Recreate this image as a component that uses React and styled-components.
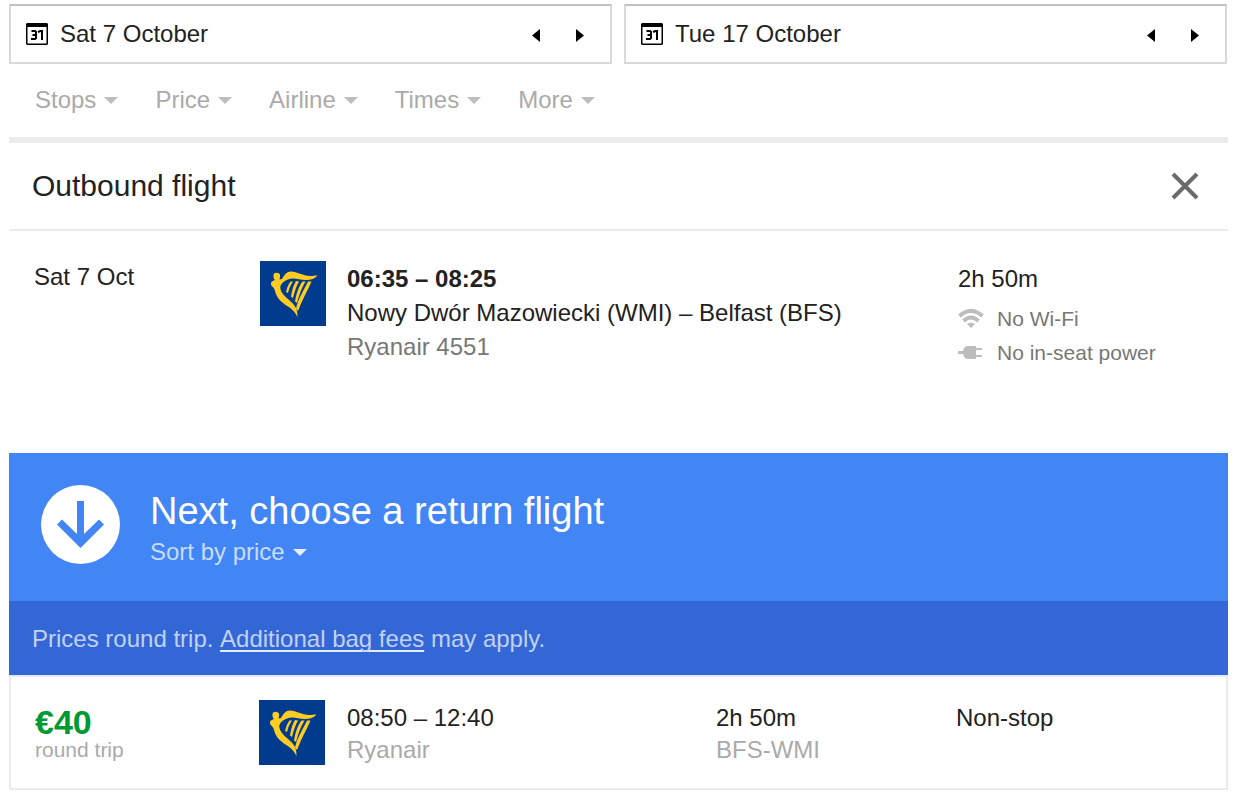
import React from "react";
import styled, { createGlobalStyle } from "styled-components";

const GlobalStyle = createGlobalStyle`
  *, *::before, *::after { box-sizing: border-box; }
  body {
    margin: 0;
    background: #fff;
    color: #222;
    font: 24px/32px "Liberation Sans", Arial, sans-serif;
  }
  h1, h2, p, ul { margin: 0; padding: 0; font-weight: 400; }
  button { margin: 0; padding: 0; border: 0; background: none; color: inherit; font: inherit; cursor: pointer; }
  svg { display: block; flex: none; }
`;

const Page = styled.main`
  padding: 4px 12px 12px 9px;
`;

const DateBar = styled.div`
  display: grid;
  grid-template-columns: 1fr 1fr;
  gap: 12px;
  padding-right: 1px;
`;

const DateBox = styled.div`
  display: flex;
  align-items: center;
  height: 60px;
  padding: 0 20px 0 15px;
  border: 2px solid #d9d9d9;
  border-top-color: #c0c0c0;
`;

const DateInput = styled.input`
  flex: 1;
  min-width: 0;
  height: 32px;
  margin: 0 0 0 12px;
  padding: 0;
  border: 0;
  outline: 0;
  background: none;
  color: #222;
  font: inherit;
`;

const StepButton = styled.button`
  display: grid;
  place-items: center;
  width: 44px;
  height: 44px;
  padding-top: 2px;
  &:last-child { margin-right: -12px; }
`;

const Filters = styled.nav`
  display: flex;
  gap: 37px;
  height: 79px;
  padding: 20px 26px 0;
  border-bottom: 6px solid #ebebeb;
`;

const MenuButton = styled.button`
  display: flex;
  align-items: center;
  gap: 8px;
  height: 32px;
  color: ${(p) => p.$color};
  &::after {
    content: "";
    border: solid transparent;
    border-width: 7px 7px 0;
    border-top-color: ${(p) => p.$arrow};
  }
`;

const SectionHeader = styled.header`
  display: flex;
  align-items: center;
  justify-content: space-between;
  height: 88px;
  padding: 0 29px 0 23px;
  border-bottom: 2px solid #ebebeb;
`;

const SectionTitle = styled.h1`
  font-size: 30px;
  line-height: 36px;
`;

const Outbound = styled.section`
  display: grid;
  grid-template-columns: 226px 87px 1fr 270px;
  align-items: start;
  min-height: 222px;
  padding: 30px 0 30px 25px;
`;

const Lines = styled.div`
  display: grid;
  grid-auto-rows: ${(p) => p.$step}px;
  align-items: center;
  padding-top: ${(p) => p.$top || 0}px;
`;

const Muted = styled.span`
  color: ${(p) => p.$color || "#aaa"};
`;

const Amenity = styled.span`
  display: flex;
  align-items: center;
  gap: 13px;
  padding-top: 12px;
  color: #777;
  font-size: 21px;
  line-height: 24px;
`;

const NextPanel = styled.section`
  display: flex;
  gap: 30px;
  min-height: 148px;
  padding: 32px;
  background: #4285f4;
  color: #fff;
`;

const NextTitle = styled.h2`
  font-size: 38px;
  line-height: 48px;
  padding: 2px 0 1px;
`;

const FeeNote = styled.p`
  display: flex;
  align-items: center;
  min-height: 74px;
  padding: 2px 23px 0;
  background: #3367d6;
  color: #c2d1f3;
  white-space: pre;
  a { color: inherit; text-underline-offset: 3px; text-decoration: underline 2px #e4ebfa; text-decoration-skip-ink: none; }
`;

const Result = styled.article`
  display: grid;
  grid-template-columns: 224px 88px 1fr 240px 270px;
  align-items: start;
  min-height: 115px;
  padding: 23px 0 22px 24px;
  border: 2px solid #ebebeb;
  border-top-color: #e3eafa;
`;

const FareBlock = styled.div`
  display: grid;
  padding-top: 4px;
`;

const Price = styled.strong`
  color: #093;
  font-size: 34px;
  line-height: 36px;
`;

const FareNote = styled.span`
  color: #aaa;
  font-size: 21px;
  line-height: 20px;
`;

function CalendarIcon() {
  return (
    <svg width="22" height="22" viewBox="0 0 22 22" aria-hidden="true">
      <path fill="#000" fillRule="evenodd" d="M1 0H21L22 1V21L21 22H1L0 21V1ZM1.500 4V20.500H20.500V4Z" />
      <path fill="none" stroke="#000" strokeWidth="2" d="M5.500 8H9L10 9V15L9 16H5M6.500 12H10M12 9L14.500 8H16V17" />
    </svg>
  );
}

function StepArrow({ back }) {
  return (
    <svg width="8" height="13" viewBox="0 0 8 13" aria-hidden="true">
      <path fill="#000" d={back ? "M8 0V13L0 6.5Z" : "M0 0V13L8 6.5Z"} />
    </svg>
  );
}

function HarpLogo() {
  return (
    <svg width="66" height="65" viewBox="0 0 66 65" role="img" aria-label="Ryanair">
      <rect width="66" height="65" fill="#003b8e" />
      <g fill="#fc2">
        <path d="M13.500 14.500C13.500 12.500 15 11.500 17 11.800C19.500 12 20.500 13.500 20 16L19.500 18.500L22 18C24 14 27 10.500 31 10.500C37 10.500 43 15 50 15C53 15 55 14.500 57.500 14.500C55 17.500 51 19 46 19C38 18.500 34 16 28 18.500C23 20.500 19.500 24 20.500 28C21.500 34 30 39 34 44C37 48 37.500 51 37.500 56C35 51 32.500 48.500 28 45.500C20 40.500 16.500 36 15 30C14.500 27 12.500 26 11.500 24.500C10 22 11.500 20 15 19C13.500 17.500 13.500 16.500 13.500 14.500Z" />
        <path d="M30.500 20.500L33 20.500C30.500 24 29 28 28 32L26 31C27 27 28 24 30.500 20.500ZM36 20L39 20.500C36 26 34.500 31 33 37L31 35.500C32 29 33.500 24 36 20ZM42.500 20.500L45.500 20.500C41.500 27 39 34 37 42L35 40.500C36.500 32 38.500 26 42.500 20.500ZM48 20.500L51.500 20.500C48 29 42 39 38 50L36 47.500C38.500 37 44 29 48 20.500Z" />
      </g>
    </svg>
  );
}

function WifiIcon() {
  return (
    <svg width="26" height="20" viewBox="0 0 26 20" aria-hidden="true">
      <g fill="none" stroke="#bdbdbd" strokeWidth="4">
        <path d="M1.500 7Q13 -3 24.500 7" />
        <path d="M5.500 12Q13 5 20.500 12" />
      </g>
      <path fill="#bdbdbd" d="M9 15Q13 12 17 15L13 19Z" />
    </svg>
  );
}

function PlugIcon() {
  return (
    <svg width="26" height="16" viewBox="0 0 26 16" aria-hidden="true">
      <path fill="#bdbdbd" d="M0 6H5Q6 1 10 1H18V3H24V5H18V10H24V12H18V14H10Q6 14 5 9H0Z" />
    </svg>
  );
}

function CloseIcon() {
  return (
    <svg width="28" height="28" viewBox="0 0 28 28" aria-hidden="true">
      <path stroke="#6b6b6b" strokeWidth="4" d="M2 2L26 26M26 2L2 26" />
    </svg>
  );
}

function DownBadge() {
  return (
    <svg width="79" height="79" viewBox="0 0 79 79" aria-hidden="true">
      <circle cx="39.500" cy="39.500" r="39.500" fill="#fff" />
      <path fill="#4285f4" d="M36 16H43V49L58 34.500L63 39.500L39.500 63L16 39.500L21 34.500L36 49Z" />
    </svg>
  );
}

function DateField({ label, value }) {
  return (
    <DateBox>
      <CalendarIcon />
      <DateInput aria-label={label} defaultValue={value} />
      <StepButton type="button" aria-label={`${label}: previous day`}><StepArrow back /></StepButton>
      <StepButton type="button" aria-label={`${label}: next day`}><StepArrow /></StepButton>
    </DateBox>
  );
}

const filters = ["Stops", "Price", "Airline", "Times", "More"];

export default function App() {
  return (
    <>
      <GlobalStyle />
      <Page>
        <DateBar>
          <DateField label="Departure date" value="Sat 7 October" />
          <DateField label="Return date" value="Tue 17 October" />
        </DateBar>
        <Filters aria-label="Filters">
          {filters.map((name) => (
            <MenuButton key={name} type="button" $color="#aaa" $arrow="#bdbdbd">{name}</MenuButton>
          ))}
        </Filters>
        <SectionHeader>
          <SectionTitle>Outbound flight</SectionTitle>
          <button type="button" aria-label="Remove outbound flight"><CloseIcon /></button>
        </SectionHeader>
        <Outbound>
          <span>Sat 7 Oct</span>
          <HarpLogo />
          <Lines $step={34} $top={1}>
            <strong>06:35 – 08:25</strong>
            <span>Nowy Dwór Mazowiecki (WMI) – Belfast (BFS)</span>
            <Muted $color="#777">Ryanair 4551</Muted>
          </Lines>
          <Lines $step={34} $top={1}>
            <span>2h 50m</span>
            <Amenity><WifiIcon />No Wi-Fi</Amenity>
            <Amenity><PlugIcon />No in-seat power</Amenity>
          </Lines>
        </Outbound>
        <NextPanel>
          <DownBadge />
          <div>
            <NextTitle>Next, choose a return flight</NextTitle>
            <MenuButton type="button" $color="#c9dcfc" $arrow="#e3edfd">Sort by price</MenuButton>
          </div>
        </NextPanel>
        <FeeNote>
          {"Prices round trip. "}<a href="#bag-fees">Additional bag fees</a>{" may apply."}
        </FeeNote>
        <Result>
          <FareBlock>
            <Price>€40</Price>
            <FareNote>round trip</FareNote>
          </FareBlock>
          <HarpLogo />
          <Lines $step={32} $top={2}>
            <span>08:50 – 12:40</span>
            <Muted>Ryanair</Muted>
          </Lines>
          <Lines $step={32} $top={2}>
            <span>2h 50m</span>
            <Muted>BFS-WMI</Muted>
          </Lines>
          <Lines $step={32} $top={2}>
            <span>Non-stop</span>
          </Lines>
        </Result>
      </Page>
    </>
  );
}
